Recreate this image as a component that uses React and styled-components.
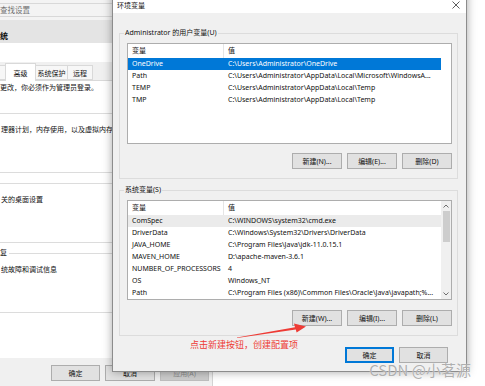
import React from "react";
import styled, { createGlobalStyle } from "styled-components";

const GlobalStyle = createGlobalStyle`
  html, body {
    margin: 0;
    padding: 0;
    background: #fff;
  }
  * { box-sizing: border-box; }
`;

const UI_FONT = `"Noto Sans", "Noto Sans CJK SC", sans-serif`;

const Desktop = styled.div`
  position: relative;
  width: 485px;
  height: 386px;
  overflow: hidden;
  background: #fff;
  font-family: ${UI_FONT};
  font-size: 7px;
  color: #111;
`;

/* ---------- window behind (系统属性) ---------- */

const BackWindow = styled.div`
  position: absolute;
  left: 0;
  top: 0;
  width: 213px;
  height: 386px;
  display: flex;
  flex-direction: column;
  background: #fff;
  border-right: 1px solid #d4d4d4;
  overflow: hidden;
`;

const SearchRow = styled.div`
  height: 20px;
  padding-top: 3px;
  background: #f3f3f3;
`;

const SearchBox = styled.div`
  height: 14px;
  border-top: 1px solid #d8d8d8;
  border-bottom: 1px solid #d8d8d8;
  line-height: 12px;
  font-size: 7.5px;
  color: #707070;
  white-space: nowrap;
`;

const TitleBand = styled.div`
  height: 23px;
  background: #e4e4e4;
  display: flex;
  align-items: flex-end;
  padding-bottom: 2px;
  font-size: 8px;
  font-weight: bold;
  line-height: 11px;
  white-space: nowrap;
`;

const Spacer = styled.div`
  height: ${p => p.h}px;
  flex: none;
`;

const TabStrip = styled.div`
  height: 19px;
  background: #f0f0f0;
  display: flex;
  align-items: flex-end;
  border-bottom: 1px solid #d9d9d9;
`;

const Tab = styled.div`
  width: ${p => p.w}px;
  height: ${p => (p.active ? 18 : 15)}px;
  margin-bottom: ${p => (p.active ? -1 : 0)}px;
  background: ${p => (p.active ? "#fff" : "#f7f7f7")};
  border: 1px solid #d9d9d9;
  border-bottom: ${p => (p.active ? "none" : "1px solid #d9d9d9")};
  margin-left: -1px;
  display: flex;
  align-items: center;
  justify-content: center;
  padding-top: ${p => (p.active ? 0 : 1)}px;
  white-space: nowrap;
  font-size: 7px;
`;

const Panel = styled.div`
  flex: 1;
  background: #fff;
  padding-top: 2px;
  display: flex;
  flex-direction: column;
`;

const Line = styled.div`
  height: 10px;
  line-height: 10px;
  white-space: nowrap;
  font-size: 7px;
`;

const BackGroup = styled.div`
  position: relative;
  height: 60px;
  margin-top: ${p => p.top}px;
  margin-left: -10px;
  padding-left: 10px;
  padding-top: 11px;
  border: 1px solid #dcdcdc;
`;

const BackLegend = styled.span`
  position: absolute;
  left: 9px;
  top: -6px;
  line-height: 10px;
  background: #fff;
  padding-right: 2px;
  font-size: 7px;
`;

const BackButtonRow = styled.div`
  display: flex;
  justify-content: flex-end;
  margin-top: 9px;
  padding-right: 20px;
`;

const Footer = styled.div`
  height: 28px;
  background: #f0f0f0;
  display: flex;
  justify-content: flex-end;
  gap: 5px;
  padding: 7px 3px 0 0;
`;

/* ---------- buttons ---------- */

const Button = styled.div`
  width: ${p => p.w || 50}px;
  height: 16px;
  flex: none;
  display: flex;
  align-items: center;
  justify-content: center;
  background: ${p => (p.disabled ? "#cccccc" : "#e1e1e1")};
  color: ${p => (p.disabled ? "#8a8a8a" : "#111")};
  border: 1px solid ${p => (p.primary ? "#0078d7" : p.disabled ? "#bfbfbf" : "#adadad")};
  box-shadow: ${p => (p.primary ? "inset 0 0 0 1px #0078d7" : "none")};
  font-size: 7px;
  white-space: nowrap;
`;

/* ---------- 环境变量 dialog ---------- */

const Dialog = styled.div`
  position: absolute;
  left: 112px;
  top: -10px;
  width: 355px;
  height: 382px;
  display: flex;
  flex-direction: column;
  background: #f0f0f0;
  border: 1px solid #8c8c8c;
  box-shadow: 0 0 9px rgba(0, 0, 0, 0.35);
`;

const TitleBar = styled.div`
  height: 22px;
  flex: none;
  background: #fff;
  display: flex;
  align-items: center;
  justify-content: space-between;
  padding: 6px 6px 0 4px;
  font-size: 7px;
`;

const Body = styled.div`
  flex: 1;
  display: flex;
  flex-direction: column;
  padding: 15px 8px 0 6px;
  gap: 6px;
`;

const GroupBox = styled.fieldset`
  margin: 0;
  min-width: 0;
  border: 1px solid #dcdcdc;
  padding: 5px 5px 9px 7px;
  display: flex;
  flex-direction: column;

  legend {
    padding: 0 1px;
    margin-left: -3px;
    line-height: 10px;
    font-size: 7px;
  }
`;

const ListView = styled.div`
  height: ${p => p.h}px;
  background: #fff;
  border: 1px solid #adadad;
  display: flex;
  overflow: hidden;
`;

const Columns = styled.div`
  flex: 1;
  display: flex;
  flex-direction: column;
`;

const Row = styled.div`
  width: 313px;
  height: ${p => (p.header ? 14 : 12)}px;
  display: grid;
  grid-template-columns: 96px 217px;
  align-items: center;
  background: ${p => (p.selected ? "#0078d7" : p.muted ? "#ebebeb" : "transparent")};
  color: ${p => (p.selected ? "#fff" : "#111")};
  font-size: 7px;
  line-height: 12px;
`;

const Cell = styled.div`
  height: 100%;
  display: flex;
  align-items: center;
  padding-left: 4px;
  white-space: nowrap;
  overflow: hidden;
  border-right: ${p => (p.divider ? "1px solid #e5e5e5" : "none")};
`;

const ScrollBar = styled.div`
  width: 10px;
  flex: none;
  background: #f0f0f0;
  display: flex;
  flex-direction: column;
  align-items: center;
`;

const ScrollArrow = styled.div`
  height: 10px;
  display: flex;
  align-items: center;
  justify-content: center;
`;

const Thumb = styled.div`
  width: 7px;
  height: 31px;
  background: #cdcdcd;
`;

const ScrollFill = styled.div`
  flex: 1;
`;

const ButtonRow = styled.div`
  display: flex;
  justify-content: flex-end;
  gap: 5px;
  margin-top: ${p => p.top}px;
`;

const DialogFooter = styled.div`
  display: flex;
  justify-content: flex-end;
  gap: 5px;
  margin-top: 5px;
  padding-right: 10px;
`;

/* ---------- annotations ---------- */

const Overlay = styled.svg`
  position: absolute;
  left: 0;
  top: 0;
  pointer-events: none;
`;

const Note = styled.div`
  position: absolute;
  left: 190px;
  top: 339px;
  font-family: "Noto Sans CJK SC", sans-serif;
  font-size: 9px;
  line-height: 12px;
  color: #ee3b35;
  white-space: nowrap;
`;

const Watermark = styled.div`
  position: absolute;
  right: 14px;
  bottom: 7px;
  font-family: "Noto Sans CJK SC", sans-serif;
  font-size: 15px;
  line-height: 18px;
  color: rgba(150, 150, 150, 0.75);
  text-shadow: 0 0 1px rgba(255, 255, 255, 0.9);
  white-space: nowrap;
`;

const Chevron = ({ up }) => (
  <svg width="6" height="4" viewBox="0 0 6 4">
    <path
      d={up ? "M0.5 3.5 L3 1 L5.5 3.5" : "M0.5 0.5 L3 3 L5.5 0.5"}
      fill="none"
      stroke="#606060"
      strokeWidth="0.9"
    />
  </svg>
);

const CloseIcon = () => (
  <svg width="8" height="8" viewBox="0 0 8 8">
    <path d="M0.5 0.5 L7.5 7.5 M7.5 0.5 L0.5 7.5" stroke="#333" strokeWidth="0.8" />
  </svg>
);

const userVars = [
  ["OneDrive", "C:\\Users\\Administrator\\OneDrive"],
  ["Path", "C:\\Users\\Administrator\\AppData\\Local\\Microsoft\\WindowsA..."],
  ["TEMP", "C:\\Users\\Administrator\\AppData\\Local\\Temp"],
  ["TMP", "C:\\Users\\Administrator\\AppData\\Local\\Temp"],
];

const systemVars = [
  ["ComSpec", "C:\\WINDOWS\\system32\\cmd.exe"],
  ["DriverData", "C:\\Windows\\System32\\Drivers\\DriverData"],
  ["JAVA_HOME", "C:\\Program Files\\Java\\jdk-11.0.15.1"],
  ["MAVEN_HOME", "D:\\apache-maven-3.6.1"],
  ["NUMBER_OF_PROCESSORS", "4"],
  ["OS", "Windows_NT"],
  ["Path", "C:\\Program Files (x86)\\Common Files\\Oracle\\Java\\javapath;%..."],
];

const VarList = ({ rows, height, selected, muted, scroll }) => (
  <ListView h={height}>
    <Columns>
      <Row header>
        <Cell divider>变量</Cell>
        <Cell>值</Cell>
      </Row>
      {rows.map(([name, value], i) => (
        <Row key={name + i} selected={i === selected} muted={i === muted}>
          <Cell>{name}</Cell>
          <Cell>{value}</Cell>
        </Row>
      ))}
    </Columns>
    {scroll && (
      <ScrollBar>
        <ScrollArrow><Chevron up /></ScrollArrow>
        <Thumb />
        <ScrollFill />
        <ScrollArrow><Chevron /></ScrollArrow>
      </ScrollBar>
    )}
  </ListView>
);

const App = () => (
  <Desktop>
    <GlobalStyle />

    <BackWindow>
      <SearchRow>
        <SearchBox>查找设置</SearchBox>
      </SearchRow>
      <TitleBand>统</TitleBand>
      <Spacer h={19} />
      <TabStrip>
        <Tab w={7} />
        <Tab w={31} active>高级</Tab>
        <Tab w={33}>系统保护</Tab>
        <Tab w={26}>远程</Tab>
      </TabStrip>
      <Panel>
        <Line>更改，你必须作为管理员登录。</Line>
        <BackGroup top={20}>
          <Line>理器计划，内存使用，以及虚拟内存</Line>
        </BackGroup>
        <BackGroup top={10}>
          <Line>关的桌面设置</Line>
        </BackGroup>
        <BackGroup top={10}>
          <BackLegend>复</BackLegend>
          <Line>统故障和调试信息</Line>
        </BackGroup>
        <BackButtonRow>
          <Button w={80}>环境变量(N)...</Button>
        </BackButtonRow>
      </Panel>
      <Footer>
        <Button w={49}>确定</Button>
        <Button w={50}>取消</Button>
        <Button w={49} disabled>应用(A)</Button>
      </Footer>
    </BackWindow>

    <Dialog>
      <TitleBar>
        <span>环境变量</span>
        <CloseIcon />
      </TitleBar>
      <Body>
        <GroupBox>
          <legend>Administrator 的用户变量(U)</legend>
          <VarList rows={userVars} height={101} selected={0} />
          <ButtonRow top={9}>
            <Button>新建(N)...</Button>
            <Button>编辑(E)...</Button>
            <Button>删除(D)</Button>
          </ButtonRow>
        </GroupBox>
        <GroupBox>
          <legend>系统变量(S)</legend>
          <VarList rows={systemVars} height={100} muted={0} scroll />
          <ButtonRow top={10}>
            <Button>新建(W)...</Button>
            <Button>编辑(I)...</Button>
            <Button>删除(L)</Button>
          </ButtonRow>
        </GroupBox>
        <DialogFooter>
          <Button w={49} primary>确定</Button>
          <Button w={49}>取消</Button>
        </DialogFooter>
      </Body>
    </Dialog>

    <Overlay width="485" height="386" viewBox="0 0 485 386">
      <polygon
        points="237,337.4 295,327.2 294,323.6 306,326.6 296.6,332.6 295.8,329.4 237,337.9"
        fill="#ee3b35"
      />
    </Overlay>
    <Note>点击新建按钮，创建配置项</Note>
    <Watermark>CSDN @小茗源</Watermark>
  </Desktop>
);

export default App;
